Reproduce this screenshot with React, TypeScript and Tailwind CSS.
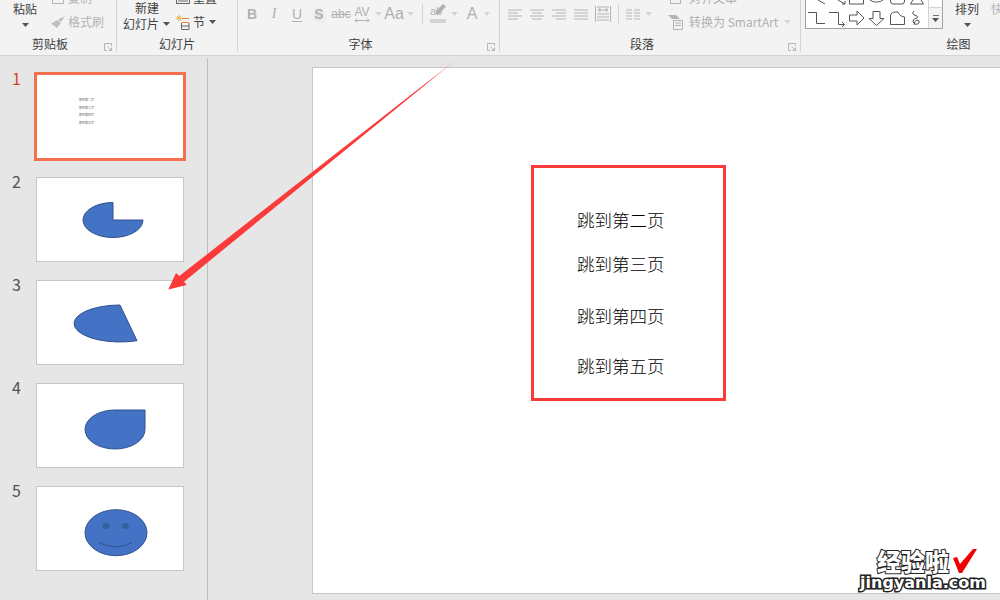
import React from "react";

function Caret({ dark = false }: { dark?: boolean }) {
  return (
    <svg width="7" height="4" viewBox="0 0 7 4" className={dark ? "text-neutral-600" : "text-neutral-300"}>
      <path d="M0 0H7L3.5 4Z" fill="currentColor" />
    </svg>
  );
}

function Launcher() {
  return (
    <svg width="8" height="8" viewBox="0 0 8 8" fill="none" stroke="#b4b4b4">
      <path d="M7.5 3V.5H.5V7.5H3" />
      <path d="M3.5 3.5L7 7M7.5 4.5V7.5H4.5" />
    </svg>
  );
}

function RibbonGroup({
  label,
  width,
  launcher = true,
  children,
}: {
  label: string;
  width: string;
  launcher?: boolean;
  children: React.ReactNode;
}) {
  return (
    <div className={`flex h-13 shrink-0 flex-col border-r border-neutral-300 ${width}`}>
      <div className="flex h-9">{children}</div>
      <div className="flex h-4 items-center text-xs leading-4 text-neutral-700">
        <div className="flex-1 text-center">{label}</div>
        {launcher && (
          <div className="flex w-4 justify-center pt-1.5">
            <Launcher />
          </div>
        )}
      </div>
    </div>
  );
}

function Cell({ w, children }: { w: string; children?: React.ReactNode }) {
  return <div className={`flex h-7 items-center justify-center ${w}`}>{children}</div>;
}

function AlignIcon({ kind }: { kind: "left" | "center" | "right" | "justify" }) {
  const rows = {
    left: ["M0 1H14", "M0 4H10", "M0 7H14", "M0 10H10"],
    center: ["M0 1H14", "M2 4H12", "M0 7H14", "M2 10H12"],
    right: ["M0 1H14", "M4 4H14", "M0 7H14", "M4 10H14"],
    justify: ["M0 1H14", "M0 4H14", "M0 7H14", "M0 10H14"],
  }[kind];
  return (
    <svg width="14" height="11" viewBox="0 0 14 11" stroke="#b4b4b4" fill="none">
      {rows.map((d) => (
        <path key={d} d={d} />
      ))}
    </svg>
  );
}

function Gallery() {
  return (
    <svg width="122" height="28" viewBox="0 0 122 28" fill="none" stroke="#555" strokeWidth="1">
      <path d="M12 0L19 4M32 0L39 4M36 4H39V1" />
      <path d="M43.500 0V4H57.500V0" />
      <path d="M64 0A8 5 0 0 0 77 0" />
      <path d="M84.500 0V1Q84.500 4 87 4H96Q98.500 4 98.500 1V0" />
      <path d="M107 0L104.500 4H117.500L115 0" />
      <path d="M2 12.500H10.500V23.500H19" />
      <path d="M23 12.500H32.500V24.500H38M36 22L38.500 24.500L36 27" />
      <path d="M43.500 15H51V11L58 18L51 25V21H43.500Z" />
      <path d="M67 11.500H74V18.500H78L70.500 25.500L63 18.500H67Z" />
      <path d="M84.500 24.500V16Q84.500 12 90 12H92Q93 16 98.500 17V24.500Z" />
      <path d="M108 11Q105 13 108 15Q113 16 111 18Q106 19 107 22Q110 26 113 23Q114 20 111 20Q108 21 108 25" />
    </svg>
  );
}

function Ribbon() {
  return (
    <div className="flex h-14 overflow-hidden border-b border-neutral-300 bg-[#f3f3f3]">
      <RibbonGroup label="剪贴板" width="w-29.25">
        <div className="flex w-12 flex-col items-center pt-px pl-0.5 text-xs leading-4 text-neutral-700">
          <span>粘贴</span>
          <span className="pt-1.5">
            <Caret dark />
          </span>
        </div>
        <div className="-mt-3.5 flex flex-col pl-0.5 text-xs text-[#b4b4b4]">
          <div className="flex h-6 items-center gap-0.5">
            <svg width="16" height="14" viewBox="0 0 16 14" fill="none" stroke="#b4b4b4">
              <rect x="2.500" y="1.500" width="11" height="11" />
            </svg>
            <span>复制</span>
          </div>
          <div className="flex h-6 items-center gap-0.5">
            <svg width="16" height="14" viewBox="0 0 16 14" fill="#c0c0c0">
              <path d="M15 1L11 7L8 4.500ZM7.500 5L11 8L7 13L1 8.500Z" />
            </svg>
            <span>格式刷</span>
          </div>
        </div>
      </RibbonGroup>

      <RibbonGroup label="幻灯片" width="w-30.25" launcher={false}>
        <div className="flex w-14 flex-col pl-1.5 text-xs leading-4 text-neutral-700">
          <span className="pl-3">新建</span>
          <span className="flex items-center gap-1">
            幻灯片 <Caret dark />
          </span>
        </div>
        <div className="-mt-3.5 flex flex-col pl-0.5 text-xs text-neutral-700">
          <div className="flex h-6 items-center gap-0.5">
            <svg width="16" height="14" viewBox="0 0 16 14" fill="none" stroke="#666">
              <rect x="1.500" y="3.500" width="13" height="9" />
              <path d="M3 7H13M3 10H13" />
            </svg>
            <span>重置</span>
          </div>
          <div className="flex h-6 items-center gap-0.5">
            <svg width="16" height="15" viewBox="0 0 16 15" fill="none">
              <path d="M1 3H7M4 0V6M2 1L6 5M6 1L2 5" stroke="#f0b34e" />
              <path d="M7 3.500H14M6.500 7.500H14" stroke="#e8833a" />
              <path d="M6.500 8V14.500H14V8M6.500 11H14" stroke="#666" />
            </svg>
            <span>节</span>
            <span className="pl-0.5">
              <Caret dark />
            </span>
          </div>
        </div>
      </RibbonGroup>

      <RibbonGroup label="字体" width="w-[262px]">
        <div className="flex pl-1 font-['Liberation_Sans',sans-serif] text-[#b0b0b0]">
          <Cell w="w-5">
            <span className="text-sm font-bold">B</span>
          </Cell>
          <Cell w="w-6">
            <span className="font-['Liberation_Serif',serif] text-sm italic">I</span>
          </Cell>
          <Cell w="w-5.5">
            <span className="text-sm underline underline-offset-2">U</span>
          </Cell>
          <Cell w="w-5.5">
            <span className="text-sm font-bold drop-shadow-sm">S</span>
          </Cell>
          <Cell w="w-5.5">
            <span className="text-xs line-through">abc</span>
          </Cell>
          <Cell w="w-5">
            <div className="flex flex-col items-center">
              <span className="text-xs leading-3">AV</span>
              <svg width="16" height="5" viewBox="0 0 16 5" fill="none" stroke="#b0b0b0">
                <path d="M1 2.500H15M3 .5L1 2.500L3 4.500M13 .5L15 2.500L13 4.500" />
              </svg>
            </div>
          </Cell>
          <Cell w="w-3">
            <Caret />
          </Cell>
          <Cell w="w-5">
            <span className="text-base">Aa</span>
          </Cell>
          <Cell w="w-3">
            <Caret />
          </Cell>
          <Cell w="w-3">
            <div className="h-5 border-l border-neutral-300" />
          </Cell>
          <Cell w="w-5">
            <div className="relative flex flex-col items-start">
              <span className="text-[11px] leading-3">ab</span>
              <div className="mt-0.5 h-1 w-4 bg-neutral-300" />
              <svg className="absolute -top-0.5 left-1" width="12" height="14" viewBox="0 0 12 14" fill="#b0b0b0">
                <path d="M9 1L12 3.500L5 11H2V8Z" />
              </svg>
            </div>
          </Cell>
          <Cell w="w-3">
            <Caret />
          </Cell>
          <Cell w="w-6">
            <span className="text-base">A</span>
          </Cell>
          <Cell w="w-1.5">
            <Caret />
          </Cell>
        </div>
      </RibbonGroup>

      <RibbonGroup label="段落" width="w-[301px]">
        <div className="flex pl-1">
          <Cell w="w-5.5">
            <AlignIcon kind="left" />
          </Cell>
          <Cell w="w-5.5">
            <AlignIcon kind="center" />
          </Cell>
          <Cell w="w-5.5">
            <AlignIcon kind="right" />
          </Cell>
          <Cell w="w-5.5">
            <AlignIcon kind="justify" />
          </Cell>
          <Cell w="w-5.5">
            <svg width="16" height="16" viewBox="0 0 16 16" fill="none" stroke="#b4b4b4">
              <path d="M.500 0V16M15.500 0V16M2 1H14M2 14H14M2 11H14M2 8H14M5 4H11M3 4L5 2.500V5.500ZM13 4L11 2.500V5.500Z" />
            </svg>
          </Cell>
          <Cell w="w-2">
            <div className="h-5 border-l border-neutral-300" />
          </Cell>
          <Cell w="w-5.5">
            <svg width="14" height="11" viewBox="0 0 14 11" stroke="#b4b4b4" fill="none">
              <path d="M0 1H6M8 1H14M0 4H6M8 4H14M0 7H6M8 7H14M0 10H6M8 10H14" />
            </svg>
          </Cell>
          <Cell w="w-2">
            <Caret />
          </Cell>
        </div>
        <div className="-mt-3.5 flex flex-col pl-4 text-xs text-[#b0b0b0]">
          <div className="flex h-6 items-center gap-1.5">
            <svg width="15" height="14" viewBox="0 0 15 14" fill="none" stroke="#b4b4b4">
              <rect x="2.500" y="2.500" width="10" height="10" />
            </svg>
            <span>对齐文本</span>
          </div>
          <div className="flex h-6 items-center gap-1.5">
            <svg width="15" height="16" viewBox="0 0 15 16" fill="none">
              <path d="M0 1H8L12 5H4Z" fill="#b4b4b4" />
              <rect x="5.500" y="6.500" width="9" height="9" stroke="#b4b4b4" fill="#f3f3f3" />
              <path d="M7 9H13M7 11.500H13" stroke="#b4b4b4" />
            </svg>
            <span className="whitespace-nowrap">转换为 SmartArt</span>
            <Caret />
          </div>
        </div>
      </RibbonGroup>

      <RibbonGroup label="绘图" width="w-79" launcher={false}>
        <div className="ml-1 flex h-7.25 border-r border-b border-l border-neutral-400 bg-white">
          <Gallery />
          <div className="flex w-3.5 flex-col border-l border-neutral-300">
            <div className="h-2 border-b border-neutral-300" />
            <div className="flex flex-1 flex-col items-center justify-center gap-0.5 bg-[#f3f3f3]">
              <div className="w-1.5 border-t border-neutral-500" />
              <Caret dark />
            </div>
          </div>
        </div>
        <div className="flex w-12 flex-col items-center pt-px text-xs leading-4 text-neutral-700">
          <span>排列</span>
          <span className="pt-1.5">
            <Caret dark />
          </span>
        </div>
        <div className="pt-px text-xs leading-4 whitespace-nowrap text-[#b4b4b4]">快速样式</div>
      </RibbonGroup>
    </div>
  );
}

function Thumb({ n, active = false, children }: { n: number; active?: boolean; children?: React.ReactNode }) {
  return (
    <div className="flex">
      <div className={`-mt-1 w-9 pl-3 text-base leading-none ${active ? "text-[#d24726]" : "text-neutral-600"}`}>{n}</div>
      <div
        className={`h-[85px] w-37 border bg-white ${
          active ? "border-[#f4704f] outline-2 outline-[#f4704f]" : "border-[#c6c6c6]"
        }`}
      >
        {children}
      </div>
    </div>
  );
}

function ShapeSvg({ children }: { children: React.ReactNode }) {
  return (
    <svg width="146" height="83" viewBox="1 1 146 83" fill="#4472c4" stroke="#2f528f">
      {children}
    </svg>
  );
}

const lines = ["跳到第二页", "跳到第三页", "跳到第四页", "跳到第五页"];

function Sidebar() {
  return (
    <div className="mt-0.5 flex w-52 shrink-0 flex-col gap-[18px] border-r border-[#bdbdbd] pt-4">
      <Thumb n={1} active>
        <div className="flex flex-col gap-1 pt-6 pl-10.5 text-[3px] leading-[3.5px] text-neutral-500">
          {lines.map((l) => (
            <span key={l}>{l}</span>
          ))}
        </div>
      </Thumb>
      <Thumb n={2}>
        <ShapeSvg>
          <path d="M77 43V25.500A30 17.500 0 1 0 107 43Z" />
        </ShapeSvg>
      </Thumb>
      <Thumb n={3}>
        <ShapeSvg>
          <path d="M84 25L101 60.700A46 18.500 0 1 1 84 25Z" />
        </ShapeSvg>
      </Thumb>
      <Thumb n={4}>
        <ShapeSvg>
          <path d="M79 27H109V46.500A30 19.500 0 1 1 79 27Z" />
        </ShapeSvg>
      </Thumb>
      <Thumb n={5}>
        <ShapeSvg>
          <ellipse cx="80" cy="46.700" rx="31" ry="23" />
          <ellipse cx="70" cy="40" rx="3.500" ry="3" fill="#365f9f" stroke="none" />
          <ellipse cx="89.300" cy="40" rx="3.500" ry="3" fill="#365f9f" stroke="none" />
          <path d="M63 56.700Q80 65 96 56.700" fill="none" />
        </ShapeSvg>
      </Thumb>
    </div>
  );
}

function Slide() {
  return (
    <div className="relative flex-1 border-y border-l border-[#c6c6c6] bg-white">
      <div className="absolute top-[97px] left-[218px] h-59 w-[195px] border-[3px] border-[#fb3a3a] pt-9.5 pl-[43px] text-[17.500px] leading-7 font-light text-black">
        <div>{lines[0]}</div>
        <div className="mt-4">{lines[1]}</div>
        <div className="mt-6">{lines[2]}</div>
        <div className="mt-5.5">{lines[3]}</div>
      </div>
      <div className="absolute right-3.5 bottom-0 flex flex-col items-center font-['DejaVu_Sans',sans-serif] font-bold text-white">
        <div className="flex items-center gap-1 pl-2">
          <span className="font-['Noto_Sans_CJK_SC',sans-serif] text-2xl leading-6 font-black [-webkit-text-stroke:2px_#222] [paint-order:stroke_fill]">
            经验啦
          </span>
          <svg width="24" height="24" viewBox="0 0 24 24" fill="#f00000">
            <path d="M0 9L4 8L7 15L20 0H24L9 24H6Z" />
          </svg>
        </div>
        <span className="text-base leading-5 [-webkit-text-stroke:3px_#222] [paint-order:stroke_fill]">jingyanla.com</span>
      </div>
    </div>
  );
}

export default function App() {
  return (
    <div className="relative h-[600px] w-[1000px] overflow-hidden bg-[#e6e6e6] font-['Noto_Sans_CJK_SC',sans-serif]">
      <Ribbon />
      <div className="flex h-[544px]">
        <Sidebar />
        <div className="flex flex-1 pt-[11px] pb-1.5 pl-26">
          <Slide />
        </div>
      </div>
      {/* annotation arrow, lies over everything */}
      <svg className="absolute inset-0" width="1000" height="600" viewBox="0 0 1000 600">
        <defs>
          <linearGradient id="tail" gradientUnits="userSpaceOnUse" x1="462" y1="55" x2="425" y2="85">
            <stop offset="0" stopColor="#fb3a3a" stopOpacity="0.1" />
            <stop offset="1" stopColor="#fb3a3a" />
          </linearGradient>
        </defs>
        <path d="M168.300 289.500L176 273L179.300 276L462 55L184 281.700L186.700 285Z" fill="url(#tail)" />
      </svg>
    </div>
  );
}
